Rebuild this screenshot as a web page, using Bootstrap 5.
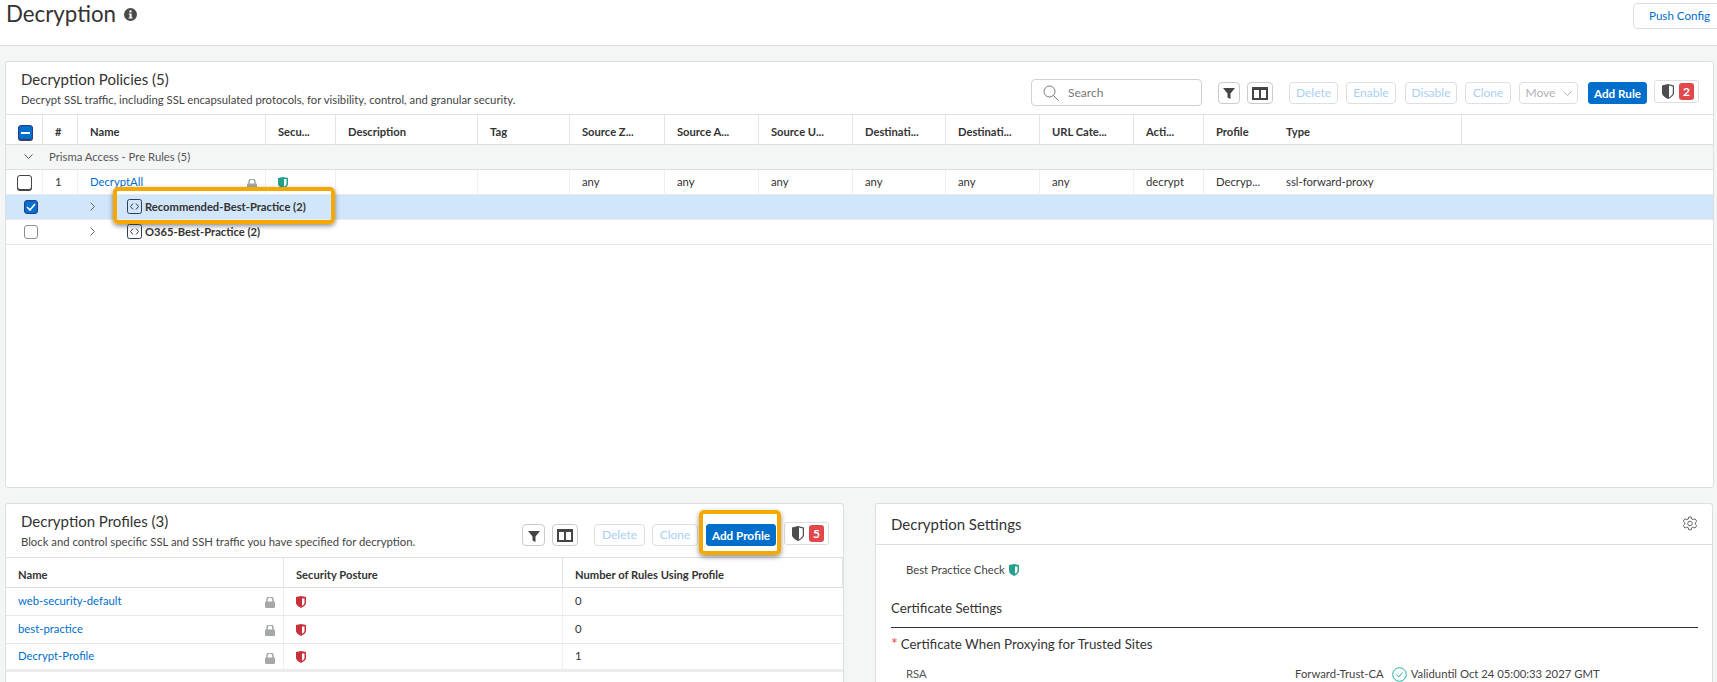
<!DOCTYPE html>
<html lang="en"><head><meta charset="utf-8"><title>Decryption</title>
<link href="https://cdn.jsdelivr.net/npm/bootstrap@5.3.0/dist/css/bootstrap.min.css" rel="stylesheet">
<style>
html,body{height:682px;overflow:hidden}
body{background:#f4f5f5;font-family:Lato,"Liberation Sans",sans-serif;font-size:11.3px;color:#333;width:1717px}
.topbar{height:46px;background:#fff;border-bottom:1px solid #dcdfdf;padding-left:6px;overflow:hidden}
.pagetitle{font-size:22.3px;line-height:28px;margin:0;color:#333;font-weight:400}
.push{height:26px;width:100px;margin:3px -16px 0 0;background:#fff;border:1px solid #dadcdc;border-radius:4px;color:#006fcc;font-size:11.6px;padding:0 0 0 15px;text-align:left;white-space:nowrap}
.workarea{padding:15px 4px 0 5px}
.panel{background:#fff;border:1px solid #dcdfdf;border-radius:3px}
.panel-top{height:427px;width:1709px;margin-bottom:15px;overflow:hidden}
.panel-low{height:179px;overflow:hidden;border-bottom:0;border-bottom-left-radius:0;border-bottom-right-radius:0}
.panel-profiles{width:839px}
.panel-settings{width:838px}
.panel-head{height:53px;padding:0 14px 0 15px;border-bottom:1px solid #dcdfdf}
.panel-low .panel-head{height:54px}
.ttl{font-size:15px;line-height:18px;color:#333;margin:0;font-weight:400}
.sub{font-size:11.3px;line-height:14px;margin:5px 0 0;color:#444}
.head-tools{padding-top:9px}
.searchbox{width:171px;height:27px;border:1px solid #cfd2d2;border-radius:4px;padding-left:11px;color:#777;gap:9px;font-size:12px}
.tb{height:22px;padding:0;border:1px solid #dcdfdf;border-radius:4px;background:#fff;font-size:12px;line-height:20px;color:#a9d0f0;text-align:center}
.tb-muted{color:#b0b3b3}
.tb-ico{border-color:#c9cccc;color:#444}
.tb-add{background:#006fcc;border-color:#006fcc;color:#fff;font-weight:700;border-radius:3px;font-size:11.7px}
.tb-add:hover{background:#006fcc;color:#fff}
.posture{height:23px;width:45px;border:1px solid #dcdfdf;border-radius:3px;padding:0 3px 0 7px;gap:5px;background:#fff;margin-top:-3px}
.cnt{background:#e2474c;color:#fff;font-weight:700;font-size:12px;line-height:17px;width:15px;height:17px;border-radius:3px;text-align:center}
.tight{margin-right:-1px}
.wide1{margin-right:1px}
.wide2{margin-right:2px}
.w22{width:22px}.w23{width:23px}.w26{width:26px}.w46{width:46px}.w49{width:49px}.w50{width:50px}.w51{width:51px}.w52{width:52px}.w59{width:59px}.w70{width:70px}
.grid{table-layout:fixed;margin:0;width:100%;font-size:11.3px;--bs-table-bg:transparent;border-collapse:separate;border-spacing:0}
.grid th,.grid td{padding:0 0 0 12px;border:0;color:#333;vertical-align:middle;white-space:nowrap;overflow:visible;position:relative}
.grid thead th{height:30px;padding-top:6px;font-weight:700;font-size:11.2px;border-bottom:1px solid #dcdfdf;border-right:1px solid #e4e6e6;color:#333}
.grid tbody td{height:25px;border-bottom:1px solid #e8eaea;border-right:1px solid #eef0f0}
.grid tbody td.plain{border-right:0}
.grid tr.grouprow td{background:#f4f5f5;height:25px;border-right:0;border-bottom:1px solid #dcdfdf;padding-left:0;color:#555}
.grid tr.picked td{background:#d1e6fa;border-right:0;height:25px;border-bottom:1px solid #e8eaea}
.grid tr.prow td{height:28px}
.grid tr.lastp td{border-bottom:3px solid #eceeee}
a.lnk{color:#006fcc;text-decoration:none}
.lockic{position:absolute;right:8px;top:9px}
.rowname{display:flex;align-items:center;font-weight:700;font-size:11.2px}
.codeic{margin-right:3px;flex:none}
.chev-group{margin-left:18px}
.grouplabel{margin-left:16px}
.chev-row{margin:0 32px 0 12px}
.hilite{position:absolute;border:4px solid #f5a800;border-radius:5px;box-shadow:0 2px 5px rgba(0,0,0,.45);pointer-events:none}
.hl-rule{left:35px;top:-8px;width:222px;height:37px}
.hl-add{left:-7px;top:-14px;right:-5px;bottom:-9px}
.box{width:14px;height:14px;border:1px solid #8b8f8f;border-radius:3px;background:#fff;display:block}
.box-dark{width:15px;height:15px;border-color:#444;box-shadow:0 1px 0 #444}
.box-on{background:#006fcc;border-color:#2b3a8c}
.box-row{margin-left:18px}
.box-head{margin-left:12px}
.box-first{margin-left:11px}
.s-panel-body{padding:0 14px 0 15px}
.settings-head{height:41px;border-bottom:1px solid #dcdfdf;padding:0 14px 0 15px}
.bpc{padding:17px 0 0 15px;line-height:16px;color:#444;gap:4px}
.cert{font-size:13.3px;line-height:16px;margin:22px 0 0;color:#333}
.rule{border-bottom:1px solid #333;margin-top:11px;height:1px}
.proxy{font-size:13.3px;line-height:16px;margin-top:8px;color:#333}
.req{color:#e2474c;margin-right:3px;font-size:16px;line-height:0}
.rsa{margin-top:14px;padding-left:15px;color:#555}
.rsa-label{width:31px}
.rsa .val{margin-left:358px;color:#444;gap:4px}
</style></head>
<body>
<header class="topbar d-flex justify-content-between align-items-start">
  <div class="d-flex align-items-center gap-2" >
    <h1 class="pagetitle">Decryption</h1>
    <svg width="13" height="13" viewBox="0 0 13 13"><circle cx="6.500" cy="6.500" r="6.500" fill="#4a4a4a"/><rect x="5.400" y="2.400" width="2.200" height="2" fill="#fff"/><path d="M4.800 5.400h2.800v4h1v1.200H4.600V9.400h1V6.600h-.8z" fill="#fff"/></svg>
  </div>
  <button class="push" type="button">Push Config <svg width="8" height="5" viewBox="0 0 8 5" class="ms-1"><path d="M.5.5 4 4 7.500.5" fill="none" stroke="#888"/></svg></button>
</header>
<main class="workarea">
  <section class="panel panel-top">
    <div class="panel-head d-flex justify-content-between">
      <div class="pt-2"><h2 class="ttl">Decryption Policies (5)</h2><p class="sub">Decrypt SSL traffic, including SSL encapsulated protocols, for visibility, control, and granular security.</p></div>
      <div class="d-flex align-items-center gap-2 head-tools">
        <div class="searchbox d-flex align-items-center me-2">
          <svg width="16" height="16" viewBox="0 0 16 16"><circle cx="6.500" cy="6.500" r="5.500" fill="none" stroke="#777"/><path d="m10.500 10.500 5 5" stroke="#777" fill="none"/></svg><span>Search</span>
        </div>
        <button class="tb tb-ico w22 tight" type="button"><svg width="12" height="12" viewBox="0 0 12 12"><path d="M0 1h12L7.500 6.500V12l-3-1.500v-4z" fill="#444"/></svg></button>
        <button class="tb tb-ico me-2 w26" type="button"><svg width="16" height="13" viewBox="0 0 16 13"><path d="M0 0h16v13H0zm2 3v8h5V3zm7 0v8h5V3z" fill="#444"/></svg></button>
        <button class="tb w49" type="button">Delete</button>
        <button class="tb w50 wide1" type="button">Enable</button>
        <button class="tb w52" type="button">Disable</button>
        <button class="tb w46" type="button">Clone</button>
        <button class="tb tb-muted w59 wide2" type="button">Move <svg width="9" height="5" viewBox="0 0 9 5" class="ms-1"><path d="M.5.500 4.500 4.500 8.500.500" fill="none" stroke="#b0b3b3"/></svg></button>
        <button class="tb tb-add w59 tight" type="button">Add Rule</button>
        <div class="posture d-flex align-items-center">
          <svg width="12" height="15" viewBox="0 0 12 15"><path d="M0 1.500 6 0l6 1.500V9c0 2.500-3.500 5-6 6-2.500-1-6-3.500-6-6z" fill="#4d4d4d"/><path d="M7 1.500 10.800 2.500V9c0 1.500-2 3.300-3.800 4.300z" fill="#fff"/></svg>
          <span class="cnt">2</span>
        </div>
      </div>
    </div>
    <table class="table grid">
      <colgroup><col style="width:37px"><col style="width:35px"><col style="width:188px"><col style="width:70px"><col style="width:142px"><col style="width:92px"><col style="width:95px"><col style="width:94px"><col style="width:94px"><col style="width:93px"><col style="width:94px"><col style="width:94px"><col style="width:70px"><col style="width:70px"><col style="width:188px"><col></colgroup>
      <thead><tr>
        <th class="ps-0"><span class="box box-on d-flex align-items-center justify-content-center box-head box-dark"><svg width="9" height="2" viewBox="0 0 9 2"><rect width="9" height="2" fill="#fff"/></svg></span></th>
        <th>#</th><th>Name</th><th>Secu...</th><th>Description</th><th>Tag</th><th>Source Z...</th><th>Source A...</th><th>Source U...</th><th>Destinati...</th><th>Destinati...</th><th>URL Cate...</th><th>Acti...</th><th class="border-end-0">Profile</th><th>Type</th><th class="border-end-0"></th>
      </tr></thead>
      <tbody>
        <tr class="grouprow"><td colspan="16"><span class="d-flex align-items-center"><svg width="9" height="6" viewBox="0 0 9 6" class="chev-group"><path d="m.5.500 4 4 4-4" fill="none" stroke="#555"/></svg><span class="grouplabel">Prisma Access - Pre Rules (5)</span></span></td></tr>
        <tr>
          <td class="ps-0"><span class="box box-dark box-first"></span></td><td>1</td>
          <td><a class="lnk" href="#">DecryptAll</a><svg class="lockic" width="10" height="11" viewBox="0 0 10 11"><path d="M2 5V3a3 3 0 0 1 6 0v2" fill="none" stroke="#a5a8a8" stroke-width="1.500"/><rect y="4.500" width="10" height="6.500" rx="1" fill="#a5a8a8"/></svg></td>
          <td><svg width="10" height="12" viewBox="0 0 10 12"><path d="M0 1 5 0l5 1v6c0 2-3 4-5 5-2-1-5-3-5-5z" fill="#23a18e"/><path d="M6 2h2.500v5c0 .8-1.300 2-2.500 2.800z" fill="#fff"/></svg></td>
          <td></td><td></td><td>any</td><td>any</td><td>any</td><td>any</td><td>any</td><td>any</td><td>decrypt</td><td class="plain">Decryp...</td><td class="plain">ssl-forward-proxy</td><td class="plain"></td>
        </tr>
        <tr class="picked">
          <td class="ps-0"><span class="box box-on d-flex align-items-center justify-content-center box-row"><svg width="10" height="8" viewBox="0 0 10 8"><path d="m1 4 3 3 5-6" fill="none" stroke="#fff" stroke-width="1.600"/></svg></span></td><td></td>
          <td colspan="3" class="ps-0"><div class="rowname"><svg width="5" height="9" viewBox="0 0 5 9" class="chev-row"><path d="m.5.500 4 4-4 4" fill="none" stroke="#666"/></svg><svg class="codeic" width="15" height="15" viewBox="0 0 15 15"><rect x=".5" y=".5" width="14" height="14" rx="2" fill="none" stroke="#2e3e55"/><path d="M6 4.500 3.500 7.500 6 10.500M9 4.500l2.500 3-2.500 3" fill="none" stroke="#2e3e55"/></svg>Recommended-Best-Practice (2)</div><span class="hilite hl-rule"></span></td>
          <td colspan="11"></td>
        </tr>
        <tr>
          <td class="ps-0 plain"><span class="box box-row"></span></td><td class="plain"></td>
          <td colspan="3" class="ps-0 plain"><div class="rowname"><svg width="5" height="9" viewBox="0 0 5 9" class="chev-row"><path d="m.5.500 4 4-4 4" fill="none" stroke="#666"/></svg><svg class="codeic" width="15" height="15" viewBox="0 0 15 15"><rect x=".5" y=".5" width="14" height="14" rx="2" fill="none" stroke="#2e3e55"/><path d="M6 4.500 3.500 7.500 6 10.500M9 4.500l2.500 3-2.500 3" fill="none" stroke="#2e3e55"/></svg>O365-Best-Practice (2)</div></td>
          <td colspan="11" class="plain"></td>
        </tr>
      </tbody>
    </table>
  </section>
  <div class="d-flex" style="gap:31px">
    <section class="panel panel-low panel-profiles">
      <div class="panel-head d-flex justify-content-between">
        <div class="pt-2"><h2 class="ttl">Decryption Profiles (3)</h2><p class="sub">Block and control specific SSL and SSH traffic you have specified for decryption.</p></div>
        <div class="d-flex align-items-center gap-2 head-tools">
          <button class="tb tb-ico w23 tight" type="button"><svg width="12" height="12" viewBox="0 0 12 12"><path d="M0 1h12L7.500 6.500V12l-3-1.500v-4z" fill="#444"/></svg></button>
          <button class="tb tb-ico me-2 w26 tight" type="button"><svg width="16" height="13" viewBox="0 0 16 13"><path d="M0 0h16v13H0zm2 3v8h5V3zm7 0v8h5V3z" fill="#444"/></svg></button>
          <button class="tb w51 tight" type="button">Delete</button>
          <button class="tb w46" type="button">Clone</button>
          <div class="position-relative"><button class="tb tb-add d-block w70" type="button">Add Profile</button><span class="hilite hl-add"></span></div>
          <div class="posture d-flex align-items-center">
            <svg width="12" height="15" viewBox="0 0 12 15"><path d="M0 1.500 6 0l6 1.500V9c0 2.500-3.500 5-6 6-2.500-1-6-3.500-6-6z" fill="#4d4d4d"/><path d="M7 1.500 10.800 2.500V9c0 1.500-2 3.300-3.800 4.300z" fill="#fff"/></svg>
            <span class="cnt">5</span>
          </div>
        </div>
      </div>
      <table class="table grid">
        <colgroup><col style="width:278px"><col style="width:279px"><col></colgroup>
        <thead><tr><th>Name</th><th>Security Posture</th><th>Number of Rules Using Profile</th></tr></thead>
        <tbody>
          <tr class="prow"><td><a class="lnk" href="#">web-security-default</a><svg class="lockic" width="10" height="11" viewBox="0 0 10 11"><path d="M2 5V3a3 3 0 0 1 6 0v2" fill="none" stroke="#a5a8a8" stroke-width="1.500"/><rect y="4.500" width="10" height="6.500" rx="1" fill="#a5a8a8"/></svg></td><td><svg width="10" height="12" viewBox="0 0 10 12"><path d="M0 1 5 0l5 1v6c0 2-3 4-5 5-2-1-5-3-5-5z" fill="#c8313c"/><path d="M6 2.500h2.500v4.500c0 .8-1.300 2-2.500 2.800z" fill="#fff"/></svg></td><td class="plain">0</td></tr>
          <tr class="prow"><td><a class="lnk" href="#">best-practice</a><svg class="lockic" width="10" height="11" viewBox="0 0 10 11"><path d="M2 5V3a3 3 0 0 1 6 0v2" fill="none" stroke="#a5a8a8" stroke-width="1.500"/><rect y="4.500" width="10" height="6.500" rx="1" fill="#a5a8a8"/></svg></td><td><svg width="10" height="12" viewBox="0 0 10 12"><path d="M0 1 5 0l5 1v6c0 2-3 4-5 5-2-1-5-3-5-5z" fill="#c8313c"/><path d="M6 2.500h2.500v4.500c0 .8-1.300 2-2.500 2.800z" fill="#fff"/></svg></td><td class="plain">0</td></tr>
          <tr class="prow lastp"><td><a class="lnk" href="#">Decrypt-Profile</a><svg class="lockic" width="10" height="11" viewBox="0 0 10 11"><path d="M2 5V3a3 3 0 0 1 6 0v2" fill="none" stroke="#a5a8a8" stroke-width="1.500"/><rect y="4.500" width="10" height="6.500" rx="1" fill="#a5a8a8"/></svg></td><td><svg width="10" height="12" viewBox="0 0 10 12"><path d="M0 1 5 0l5 1v6c0 2-3 4-5 5-2-1-5-3-5-5z" fill="#c8313c"/><path d="M6 2.500h2.500v4.500c0 .8-1.300 2-2.500 2.800z" fill="#fff"/></svg></td><td class="plain">1</td></tr>
        </tbody>
      </table>
    </section>
    <section class="panel panel-low panel-settings">
      <div class="settings-head d-flex justify-content-between align-items-center">
        <h2 class="ttl">Decryption Settings</h2>
        <svg width="16" height="16" viewBox="0 0 16 16"><path d="M6.700 1h2.600l.4 2 1.500.7 1.800-1 1.700 2.400-1.400 1.400v1.800l1.400 1.400-1.700 2.400-1.800-1-1.500.7-.4 2H6.700l-.4-2-1.500-.7-1.800 1L1.300 9.700l1.400-1.400V6.500L1.300 5.100 3 2.700l1.800 1 1.500-.7z" fill="none" stroke="#666"/><circle cx="8" cy="7.500" r="2.300" fill="none" stroke="#666"/></svg>
      </div>
      <div class="s-panel-body">
        <div class="bpc d-flex align-items-center"><span>Best Practice Check</span><svg width="10" height="12" viewBox="0 0 10 12"><path d="M0 1 5 0l5 1v6c0 2-3 4-5 5-2-1-5-3-5-5z" fill="#23a18e"/><path d="M6 2.500h2.500v4.500c0 .8-1.300 2-2.500 2.800z" fill="#fff"/></svg></div>
        <h3 class="cert fw-normal">Certificate Settings</h3>
        <div class="rule"></div>
        <div class="proxy"><span class="req">*</span>Certificate When Proxying for Trusted Sites</div>
        <div class="rsa d-flex"><span class="rsa-label">RSA</span><span class="val d-flex align-items-center"><span>Forward-Trust-CA</span><svg class="ms-1" width="15" height="15" viewBox="0 0 15 15"><circle cx="7.500" cy="7.500" r="6.800" fill="none" stroke="#23b5a2"/><path d="m4.500 7.500 2.300 2.500 3.700-4.500" fill="none" stroke="#23b5a2"/></svg><span>Validuntil Oct 24 05:00:33 2027 GMT</span></span></div>
      </div>
    </section>
  </div>
</main>
</body></html>
